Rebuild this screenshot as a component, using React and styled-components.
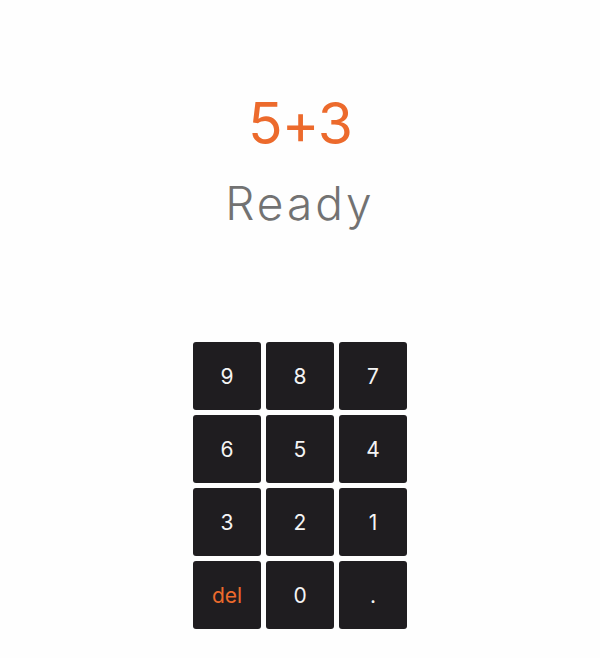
import styled, { createGlobalStyle } from "styled-components";

const GlobalStyle = createGlobalStyle`
  html, body {
    margin: 0;
    padding: 0;
    background: #fefefe;
  }
  body {
    font-family: Inter, "Noto Sans", sans-serif;
  }
`;

const Page = styled.main`
  width: 600px;
  height: 658px;
  display: flex;
  flex-direction: column;
  align-items: center;
`;

const Display = styled.section`
  display: flex;
  flex-direction: column;
  align-items: center;
  padding-top: 91px;
  height: 342px;
  box-sizing: border-box;
`;

const Expression = styled.div`
  color: #ec6a2c;
  font-size: 57px;
  line-height: 66px;
  font-weight: 400;
  letter-spacing: -1px;
`;

const Result = styled.div`
  color: #727272;
  font-size: 46px;
  line-height: 50px;
  font-weight: 300;
  letter-spacing: 3px;
  margin-top: 21px;
`;

const Keypad = styled.div`
  display: grid;
  grid-template-columns: repeat(3, 68px);
  grid-auto-rows: 68px;
  gap: 5px;
`;

const Key = styled.button`
  border: none;
  border-radius: 3px;
  background: #1f1d20;
  color: ${(p) => (p.$accent ? "#ec6a2c" : "#f4f4f4")};
  font-family: Inter, "Noto Sans", sans-serif;
  font-size: 21px;
  font-weight: 400;
  display: flex;
  align-items: center;
  justify-content: center;
  padding: 0;
  cursor: pointer;
`;

const keys = ["9", "8", "7", "6", "5", "4", "3", "2", "1", "del", "0", "."];

export default function App() {
  return (
    <>
      <GlobalStyle />
      <Page>
        <Display>
          <Expression>5+3</Expression>
          <Result>Ready</Result>
        </Display>
        <Keypad>
          {keys.map((k) => (
            <Key key={k} $accent={k === "del"}>
              {k}
            </Key>
          ))}
        </Keypad>
      </Page>
    </>
  );
}
